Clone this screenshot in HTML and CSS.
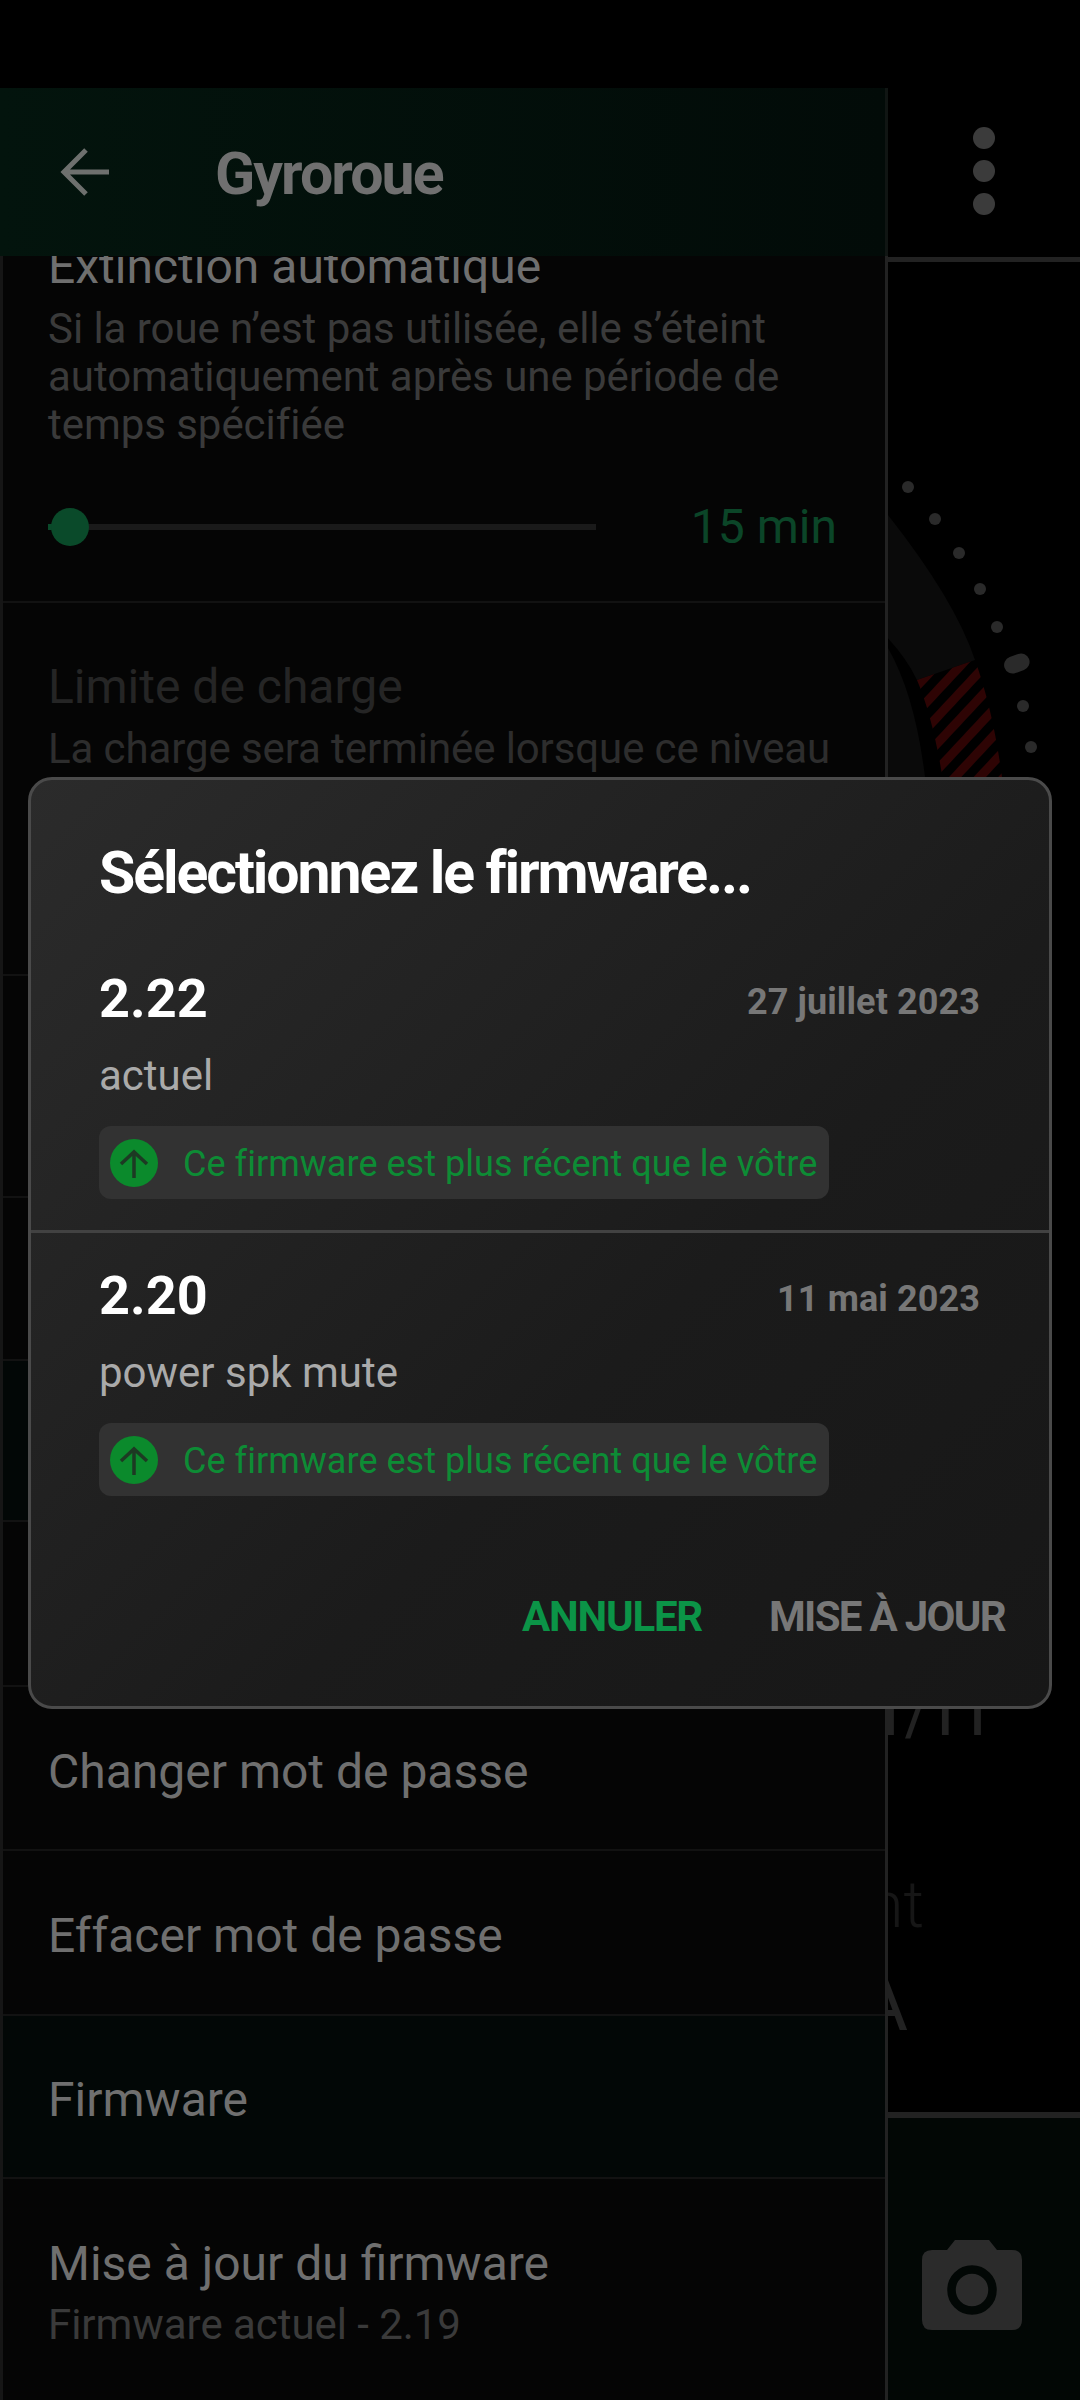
FILE: index.html
```html
<!DOCTYPE html>
<html lang="fr">
<head>
  <meta charset="UTF-8">
  <title>Gyroroue</title>
  <link rel="stylesheet" href="styles.css">
</head>
<body>
  <div class="page">
    <div class="status-bar"></div>
    <div class="top-bar">
      <div class="more-dots"><span></span><span></span><span></span></div>
    </div>
    <div class="gauge">
      <svg class="gauge-art" width="192" height="360" viewBox="888 440 192 360">
        <defs>
          <pattern id="hatch" width="18" height="18" patternUnits="userSpaceOnUse" patternTransform="rotate(-47)">
            <rect width="18" height="9" fill="#2e0404"/>
          </pattern>
        </defs>
        <path d="M880 505 L888 515 Q955 600 975 660 L917 680 Q905 655 880 630 Z" fill="#0a0a0a"/>
        <path d="M917 680 L975 660 Q993 710 1002 777 L1006 800 L946 800 Q935 722 917 680 Z" fill="url(#hatch)"/>
        <path d="M880 640 L888 648 Q915 695 925 777 L925 800 L880 800 Z" fill="#0a0a0a"/>
        <g fill="#2a2a2a">
          <circle cx="908" cy="487" r="6"/>
          <circle cx="935" cy="519" r="6"/>
          <circle cx="959" cy="553" r="6"/>
          <circle cx="980" cy="589" r="6"/>
          <circle cx="997" cy="627" r="6"/>
          <rect x="1004" y="655" width="26" height="17" rx="8.5" transform="rotate(-20 1017 664)"/>
          <circle cx="1023" cy="706" r="6"/>
          <circle cx="1031" cy="747" r="6"/>
        </g>
      </svg>
      <span class="gauge-text ratio">1/11</span>
      <span class="gauge-text label">nt</span>
      <span class="gauge-text unit">A</span>
    </div>
    <div class="bottom-bar">
      <svg width="100" height="90" viewBox="0 0 100 90">
        <path d="M10 10 H25 L33 0 H67 L75 10 H90 Q100 10 100 20 V80 Q100 90 90 90 H10 Q0 90 0 80 V20 Q0 10 10 10 Z" fill="#2b2b2b"/>
        <circle cx="50" cy="50" r="20.5" fill="none" stroke="#020705" stroke-width="8.5"/>
      </svg>
    </div>
  </div>

  <!-- panneau des réglages -->
  <div class="drawer">
    <div class="toolbar">
      <svg class="back-icon" width="50" height="50" viewBox="0 0 50 50">
        <path d="M49 25 H3 M26 3 L4 25 L26 47" fill="none" stroke="#6e706e" stroke-width="5"/>
      </svg>
      <div class="toolbar-title">Gyroroue</div>
    </div>
    <div class="list">
      <div class="row row-auto">
        <div class="row-title">Extinction automatique</div>
        <div class="row-sub">Si la roue n’est pas utilisée, elle s’éteint automatiquement après une période de temps spécifiée</div>
        <div class="slider">
          <div class="slider-track"><span class="slider-thumb"></span></div>
          <div class="slider-value">15 min</div>
        </div>
      </div>
      <div class="row row-limit">
        <div class="row-title disabled">Limite de charge</div>
        <div class="row-sub disabled">La charge sera terminée lorsque ce niveau</div>
      </div>
      <div class="row row-h222"></div>
      <div class="row row-h163"></div>
      <div class="row row-h161 selected"></div>
      <div class="row row-h165"></div>
      <div class="row row-h164"><div class="row-title">Changer mot de passe</div></div>
      <div class="row row-h165"><div class="row-title">Effacer mot de passe</div></div>
      <div class="row row-firmware selected"><div class="row-title">Firmware</div></div>
      <div class="row row-update">
        <div class="row-title">Mise à jour du firmware</div>
        <div class="row-sub">Firmware actuel - 2.19</div>
      </div>
    </div>
  </div>

  <!-- dialogue -->
  <div class="dialog">
    <h2 class="dialog-title">Sélectionnez le firmware...</h2>
    <div class="fw-item has-line">
      <div class="fw-head">
        <span class="fw-version">2.22</span>
        <span class="fw-date">27 juillet 2023</span>
      </div>
      <div class="fw-note">actuel</div>
      <div class="fw-badge">
        <svg width="48" height="48" viewBox="0 0 48 48">
          <circle cx="24" cy="24" r="24" fill="#0b8a2c"/>
          <path d="M24 39 V13 M11 25 L24 13 L37 25" fill="none" stroke="#1d3a23" stroke-width="3.5"/>
        </svg>
        <span class="fw-badge-text">Ce firmware est plus récent que le vôtre</span>
      </div>
    </div>
    <div class="fw-item">
      <div class="fw-head">
        <span class="fw-version">2.20</span>
        <span class="fw-date">11 mai 2023</span>
      </div>
      <div class="fw-note">power spk mute</div>
      <div class="fw-badge">
        <svg width="48" height="48" viewBox="0 0 48 48">
          <circle cx="24" cy="24" r="24" fill="#0b8a2c"/>
          <path d="M24 39 V13 M11 25 L24 13 L37 25" fill="none" stroke="#1d3a23" stroke-width="3.5"/>
        </svg>
        <span class="fw-badge-text">Ce firmware est plus récent que le vôtre</span>
      </div>
    </div>
    <div class="dialog-actions">
      <span class="btn-cancel">ANNULER</span>
      <span class="btn-update">MISE À JOUR</span>
    </div>
  </div>
</body>
</html>
```

FILE: styles.css
```css
html, body {
  margin: 0;
  padding: 0;
  width: 1080px;
  height: 2400px;
  overflow: hidden;
  background-color: #000;
  font-family: 'Roboto', sans-serif;
}

body {
  position: relative;
}

.page {
  height: 2400px;
  display: flex;
  flex-direction: column;
}

.status-bar {
  height: 88px;
}

.top-bar {
  height: 174px;
  box-sizing: border-box;
  border-bottom: 5px solid #222;
  display: flex;
  justify-content: flex-end;
  padding: 39px 85px 0 0;
}

.more-dots {
  display: flex;
  flex-direction: column;
  gap: 11px;
}

.more-dots span {
  width: 22px;
  height: 22px;
  border-radius: 50%;
  background-color: #3b3b3b;
}

.gauge {
  flex: 1;
  position: relative;
  border-bottom: 6px solid #222;
}

.gauge-art {
  position: absolute;
  right: 0;
  top: 178px;
}

.gauge-text {
  position: absolute;
}

.ratio {
  top: 1424px;
  right: 88px;
  font-size: 57px;
  line-height: 60px;
  font-weight: 500;
  color: #222;
}

.label {
  top: 1609px;
  right: 156px;
  font-size: 64px;
  line-height: 70px;
  font-weight: 300;
  color: #161616;
}

.unit {
  top: 1702px;
  right: 172px;
  font-size: 76px;
  line-height: 80px;
  color: #222;
}

.bottom-bar {
  height: 282px;
  box-sizing: border-box;
  background-color: #020705;
  display: flex;
  justify-content: flex-end;
  padding: 122px 58px 0 0;
}

.drawer {
  position: absolute;
  left: 0;
  top: 88px;
  width: 888px;
  height: 2312px;
  box-sizing: border-box;
  background-color: #050505;
  border-right: 3px solid #222;
  display: flex;
  flex-direction: column;
}

.toolbar {
  height: 168px;
  flex-shrink: 0;
  background: linear-gradient(90deg, #03140d, #020b08);
  display: flex;
  align-items: center;
  margin-right: -3px;
  border-right: 3px solid #101513;
}

.back-icon {
  margin-left: 60px;
}

.toolbar-title {
  margin-left: 105px;
  padding-top: 2px;
  font-size: 59px;
  letter-spacing: -1.9px;
  font-weight: 700;
  color: #707070;
}

.list {
  flex: 1;
  overflow: hidden;
  border-left: 3px solid #161616;
}

.row {
  box-sizing: border-box;
  border-bottom: 2px solid #121212;
  padding: 57px 45px 0;
}

.row-title {
  font-size: 48px;
  line-height: 56px;
  color: #6f6f6f;
}

.row-sub {
  margin-top: 10px;
  font-size: 42px;
  line-height: 48px;
  letter-spacing: -0.05px;
  color: #3a3a3a;
}

.row-title.disabled {
  color: #252525;
}

.row-sub.disabled {
  color: #2d2d2d;
  letter-spacing: -0.1px;
  white-space: nowrap;
}

.row-auto {
  margin-top: -17px;
  height: 364px;
  padding-top: 0;
}

.row-limit {
  height: 373px;
  padding-top: 56px;
}

.row-h222 { height: 222px; }
.row-h163 { height: 163px; }
.row-h161 { height: 161px; }
.row-h165 { height: 165px; }
.row-h164 { height: 164px; }

.row-firmware {
  height: 163px;
  padding-top: 56px;
}

.row-update {
  height: 220px;
  border-bottom: 0;
}

.row-update .row-sub {
  margin-top: 9px;
}

.selected {
  background-color: #020706;
}

.slider {
  display: flex;
  align-items: center;
  justify-content: space-between;
  margin-top: 51px;
  padding-right: 3px;
}

.slider-track {
  position: relative;
  width: 548px;
  height: 6px;
  background-color: #1a1a1a;
}

/* petit bout vert à gauche du curseur */
.slider-track::before {
  content: "";
  position: absolute;
  left: 0;
  top: 0;
  width: 6px;
  height: 6px;
  background-color: #0a4a2a;
}

.slider-thumb {
  position: absolute;
  left: 3px;
  top: -16px;
  width: 38px;
  height: 38px;
  border-radius: 50%;
  background-color: #0a4a2a;
}

.slider-value {
  font-size: 48px;
  line-height: 54px;
  color: #0b4528;
}

.dialog {
  position: absolute;
  left: 28px;
  top: 777px;
  width: 1024px;
  height: 932px;
  box-sizing: border-box;
  border: 3px solid #4a4a4a;
  border-radius: 24px;
  background: linear-gradient(135deg, #2b2b2b 0%, #1b1b1b 60%, #171717 100%);
}

.dialog-title {
  margin: 61px 0 31px 68px;
  font-size: 59px;
  line-height: 64px;
  letter-spacing: -2.1px;
  font-weight: 700;
  color: #fff;
}

.fw-item {
  padding: 33px 69px 31px 68px;
}

.has-line {
  border-bottom: 3px solid #424242;
}

.fw-head {
  display: flex;
  justify-content: space-between;
  align-items: flex-start;
  height: 60px;
}

.fw-version {
  font-size: 54px;
  line-height: 60px;
  font-weight: 700;
  color: #fff;
}

.fw-date {
  padding-top: 3px;
  font-size: 36px;
  line-height: 60px;
  letter-spacing: 0.1px;
  font-weight: 700;
  color: #777;
}

.fw-note {
  margin-top: 23px;
  font-size: 42px;
  line-height: 48px;
  color: #aaa;
}

.fw-badge {
  display: inline-flex;
  align-items: center;
  gap: 25px;
  margin-top: 26px;
  height: 73px;
  padding: 0 12px 0 11px;
  border-radius: 12px;
  background-color: #323232;
  font-size: 36px;
  color: #0d8c35;
}

.fw-badge-text {
  padding-top: 3px;
  letter-spacing: 0.04px;
}

.dialog-actions {
  display: flex;
  justify-content: flex-end;
  gap: 67px;
  margin-top: 66px;
  padding-right: 44px;
  font-size: 42px;
  line-height: 48px;
  font-weight: 700;
  letter-spacing: -1.2px;
}

.btn-cancel {
  color: #0b9447;
}

.btn-update {
  color: #777;
  letter-spacing: -1.7px;
}
```
